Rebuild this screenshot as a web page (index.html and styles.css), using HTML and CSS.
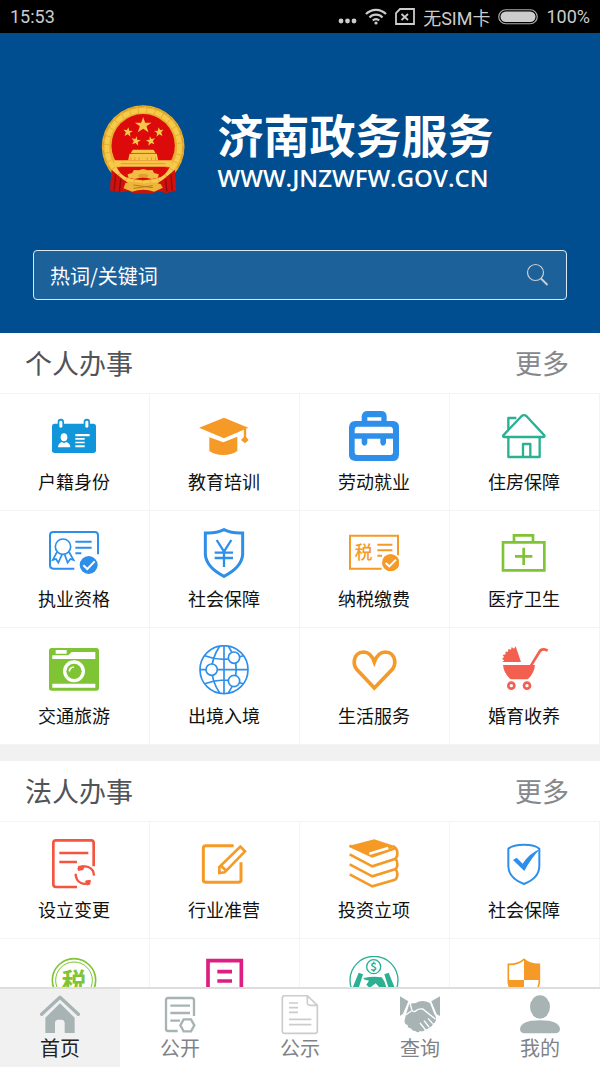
FILE: index.html
```html
<!DOCTYPE html>
<html lang="zh-CN">
<head>
    <meta charset="UTF-8">
    <meta name="viewport" content="width=device-width, initial-scale=1.0">
    <title>济南政务服务</title>
    <link rel="stylesheet" href="styles.css">
</head>
<body>
    <div class="status-bar">
        <span>15:53</span>
        <div class="status-right">
            <svg width="19" height="18" viewBox="0 0 19 18" fill="#ccc">
                <circle cx="3" cy="13" r="2.4"></circle>
                <circle cx="9.5" cy="13" r="2.4"></circle>
                <circle cx="16" cy="13" r="2.4"></circle>
            </svg>
            <svg width="22" height="18" viewBox="0 0 22 18" fill="none" stroke="#ccc" stroke-width="2.2">
                <path d="M1 6a14 14 0 0 1 20 0M4.5 9.5a9 9 0 0 1 13 0M7.8 12.500a4.5 4.5 0 0 1 6.4 0"></path>
                <circle cx="11" cy="15" r="1.6" fill="#ccc" stroke="none"></circle>
            </svg>
            <svg width="20" height="18" viewBox="0 0 20 18" fill="none" stroke="#ccc" stroke-width="1.8">
                <path d="M5 1h14v15H1V5zM6.5 6l6.500 6M13 6l-6.500 6"></path>
            </svg>
            <span>无SIM卡</span>
            <svg width="40" height="16" viewBox="0 0 40 16">
                <rect x="0.75" y="0.75" width="38.5" height="14" rx="7" fill="none" stroke="#aaa" stroke-width="1.2"></rect>
                <rect x="2.5" y="2.5" width="35" height="10.5" rx="5.25" fill="#ccc"></rect>
            </svg>
            <span>100%</span>
        </div>
    </div>

    <header class="header">
        <div class="brand">
            <svg class="emblem" width="85" height="90" viewBox="0 0 252 270">
                <path d="M30 196L26 256L58 262L80 258L100 266H150L172 258L194 264L224 256L220 196Z" fill="#c3150f"></path>
                <circle cx="125" cy="125" r="124" fill="#eab02f"></circle>
                <circle cx="125" cy="125" r="109" fill="none" stroke="#f5cb4e" stroke-width="14" stroke-dasharray="22 3"></circle>
                <circle cx="125" cy="125" r="120" fill="none" stroke="#d79a22" stroke-width="3" stroke-dasharray="16 9"></circle>
                <circle cx="125" cy="122" r="95" fill="#dc0a0a"></circle>
                <path d="M30 194L44 206L66 224L84 236L80 258L58 262L26 256ZM220 194L206 206L184 224L166 236L172 258L194 264L224 256Z" fill="#d0100c"></path>
                <path d="M42 208L38 256M58 222L54 260M208 208L212 256M192 222L196 260" stroke="#8f0d0a" stroke-width="4"></path>
                <g fill="#f8c64a">
                    <path d="M125 36l6 17h19l-15 11 6 18-16-11-16 11 6-18-15-11h19z"></path>
                    <path d="M81 67l2 10 11 1-9 6 2 11-8-7-10 5 4-11-7-8 10 1z"></path>
                    <path d="M171 67l-2 10-11 1 9 6-2 11 8-7 10 5-4-11 7-8-10 1z"></path>
                    <path d="M106 94l1 10 11 2-9 5 1 11-8-8-10 4 5-10-7-8 11 2z"></path>
                    <path d="M145 94l-1 10-11 2 9 5-1 11 8-8 10 4-5-10 7-8-11 2z"></path>
                    <path d="M94 134h62l6 10h-74z"></path>
                    <path d="M84 146h82l4 20H80z"></path>
                    <path d="M38 166h174v19H38z"></path>
                </g>
                <path d="M94 145h66M88 157v9M100 157v9M113 157v9M137 157v9M150 157v9M162 157v9M58 176h134" stroke="#d28a16" stroke-width="2"></path>
                <path d="M46 187H204Q196 206 178 216Q125 236 72 216Q54 206 46 187Z" fill="#dc0a0a"></path>
                <path d="M125 192l14 4 14-1 5 9 14 4-3 10-18 4-26-6-26 6-18-4-3-10 14-4 5-9 14 1z" fill="#f1bd43"></path>
                <ellipse cx="125" cy="212" rx="15" ry="6" fill="#dca02c"></ellipse>
                <path d="M72 234q26-8 53 2q27-10 53 2l6 10-26 12q-33-12-66 0l-26-10z" fill="#eeb53a"></path>
                <path d="M96 240l58 8M96 250l58-8" stroke="#bd7c17" stroke-width="3"></path>
            </svg>
            <div class="brand-text">
                <h1>济南政务服务</h1>
                <p>WWW.JNZWFW.GOV.CN</p>
            </div>
        </div>
        <form class="search">
            <input type="text" placeholder="热词/关键词" aria-label="热词/关键词">
            <button type="button" aria-label="搜索">
                <svg width="24" height="24" viewBox="0 0 24 24" fill="none" stroke="#c9ced3">
                    <circle cx="9.5" cy="9.5" r="8" stroke-width="1.2"></circle>
                    <path d="M15 15.5L21.5 22" stroke-width="2"></path>
                </svg>
            </button>
        </form>
    </header>

    <main class="content">
        <section>
            <div class="section-head">
                <h2>个人办事</h2>
                <a href="#">更多</a>
            </div>
            <div class="grid">
                <a class="cell" href="#">
                    <svg class="icon" viewBox="0 0 150 150" fill="#1296db">
                        <rect x="9" y="38" width="132" height="88" rx="8"></rect>
                        <rect x="26" y="23" width="19" height="32" rx="9"></rect>
                        <rect x="104" y="23" width="19" height="32" rx="9"></rect>
                        <g fill="#fff">
                            <rect x="31" y="29" width="9" height="21" rx="4"></rect>
                            <rect x="109" y="29" width="9" height="21" rx="4"></rect>
                            <ellipse cx="45" cy="79" rx="10" ry="12"></ellipse>
                            <path d="M27 109q0-12 12-16l6 4 6-4q13 4 13 16z"></path>
                            <path d="M79 69h43v7H79zM79 81h28v5H79zM79 92h28v5H79zM79 103h28v6H79z"></path>
                        </g>
                    </svg>
                    <span>户籍身份</span>
                </a>
                <a class="cell" href="#">
                    <svg class="icon" viewBox="0 0 150 150" fill="#f59a26">
                        <path d="M0 50L75 20L148 50L75 82Z"></path>
                        <path d="M31 79L73 94L115 77V120Q98 132 73 132Q48 132 31 120Z"></path>
                        <path d="M138 52V82" stroke="#f59a26" stroke-width="7"></path>
                        <path d="M138 74l11 13-11 10-12-10z"></path>
                    </svg>
                    <span>教育培训</span>
                </a>
                <a class="cell" href="#">
                    <svg class="icon" viewBox="0 0 150 150" fill="#2e8fea">
                        <path fill-rule="evenodd" d="M38 30V16Q40 0 56 0H96Q112 0 113 16V30H132Q150 32 150 48V132Q148 150 132 150H18Q0 148 0 132V48Q2 30 18 30ZM55 19V29H97V19ZM25 47Q17 48 17 57V67H132V57Q132 48 124 47ZM17 83V125Q18 132 25 132H125Q132 131 132 125V83H111V96Q108 104 102 104Q96 104 94 96V83H55V96Q52 104 47 104Q40 104 38 96V83Z"></path>
                    </svg>
                    <span>劳动就业</span>
                </a>
                <a class="cell" href="#">
                    <svg class="icon" viewBox="0 0 150 150" fill="none" stroke="#2bb094" stroke-width="7" stroke-linejoin="round">
                        <path d="M28 56V21H52M28 78V138H122V78M72 138V99H94V138"></path>
                        <path d="M13 73L68 15Q75 10 82 15L136 73Q138 78 132 78H17Q10 78 13 73Z"></path>
                    </svg>
                    <span>住房保障</span>
                </a>
                <a class="cell" href="#">
                    <svg class="icon" viewBox="0 0 150 150" fill="none" stroke="#2e8fea" stroke-width="6">
                        <path d="M147 79V22Q147 12 137 12H13Q3 12 3 22V112Q3 122 13 122H76"></path>
                        <circle cx="42" cy="56" r="23" stroke-width="5"></circle>
                        <path d="M24 72L11 96L21 93L28 104L39 80M60 72L74 96L64 93L56 104L47 80" stroke-width="5"></path>
                        <path d="M79 41H128M79 59H128M79 76H97"></path>
                        <circle cx="119" cy="111" r="27" fill="#2e8fea" stroke="none"></circle>
                        <path d="M103 112L115 123L137 100" stroke="#fff"></path>
                    </svg>
                    <span>执业资格</span>
                </a>
                <a class="cell" href="#">
                    <svg class="icon" viewBox="0 0 150 150" fill="none" stroke="#2e8fea" stroke-width="9">
                        <path d="M75 5Q50 17 19 15V80Q22 118 75 145Q128 118 131 80V15Q100 17 75 5Z"></path>
                        <path d="M53 36L75 71L97 36M75 70V117M47 74H102M47 90H102" stroke-width="7"></path>
                    </svg>
                    <span>社会保障</span>
                </a>
                <a class="cell" href="#">
                    <svg class="icon" viewBox="0 0 150 150" fill="none" stroke="#f59a26" stroke-width="6">
                        <path d="M147 82V23H3V122H98"></path>
                        <text class="icon-text" x="17" y="92" font-size="53" fill="#f59a26" stroke="none">税</text>
                        <path d="M85 50H130M85 67H130M85 83H99"></path>
                        <circle cx="125" cy="104" r="26" fill="#f59a26" stroke="none"></circle>
                        <path d="M110 105L121 115L141 95" stroke="#fff"></path>
                    </svg>
                    <span>纳税缴费</span>
                </a>
                <a class="cell" href="#">
                    <svg class="icon" viewBox="0 0 150 150" fill="none" stroke="#7fc434" stroke-width="8">
                        <path d="M12 43H136V127H12ZM45 43V22H102V43M74 59V111M48 85H100"></path>
                    </svg>
                    <span>医疗卫生</span>
                </a>
                <a class="cell" href="#">
                    <svg class="icon" viewBox="0 0 150 150" fill="#7fc434">
                        <rect x="0" y="9" width="150" height="128" rx="8"></rect>
                        <g fill="#fff">
                            <path d="M20 15H53V26H20zM10 31H58L68 21H139V42H10zM10 116H139V128H10z"></path>
                            <circle cx="75" cy="79" r="33"></circle>
                        </g>
                        <circle cx="75" cy="79" r="23"></circle>
                        <path d="M61 79Q62 67 75 66" fill="none" stroke="#fff" stroke-width="5"></path>
                    </svg>
                    <span>交通旅游</span>
                </a>
                <a class="cell" href="#">
                    <svg class="icon" viewBox="0 0 150 150" fill="none" stroke="#2e8fea" stroke-width="5">
                        <circle cx="75" cy="74" r="72"></circle>
                        <path d="M75 2V146M3 74H147M62 4Q15 74 62 144M88 4Q135 74 88 144M17 32Q75 54 133 32M17 116Q75 94 133 116"></path>
                        <g fill="#fff">
                            <circle cx="38" cy="74" r="17"></circle>
                            <circle cx="105" cy="38" r="17"></circle>
                            <circle cx="105" cy="108" r="17"></circle>
                        </g>
                    </svg>
                    <span>出境入境</span>
                </a>
                <a class="cell" href="#">
                    <svg class="icon" viewBox="0 0 150 150" fill="none" stroke="#f59a26" stroke-width="11">
                        <path d="M76 129L23 73Q14 62 16 46Q20 22 44 21Q65 21 76 51Q87 21 109 21Q133 22 137 46Q139 62 130 73Z"></path>
                    </svg>
                    <span>生活服务</span>
                </a>
                <a class="cell" href="#">
                    <svg class="icon" viewBox="0 0 150 150" fill="#f3604f">
                        <path d="M66 51L50 4L45 11L38 6L36 14L28 12L27 20L19 20L20 28L11 30L15 36L9 42L16 46L10 51Z"></path>
                        <path d="M12 60H108Q106 84 88 101Q86 103 80 103H42Q36 103 33 101Q14 84 12 60Z"></path>
                        <g fill="none" stroke="#f3604f">
                            <path d="M96 62L121 21Q128 8 146 17" stroke-width="8"></path>
                            <circle cx="37" cy="122" r="9" stroke-width="8"></circle>
                            <circle cx="84" cy="122" r="9" stroke-width="8"></circle>
                        </g>
                    </svg>
                    <span>婚育收养</span>
                </a>
            </div>
        </section>

        <section>
            <div class="section-head">
                <h2>法人办事</h2>
                <a href="#">更多</a>
            </div>
            <div class="grid">
                <a class="cell" href="#">
                    <svg class="icon" viewBox="0 0 150 150" fill="none" stroke="#f4553f" stroke-width="8">
                        <path d="M134 82V12Q134 4 126 4H21Q13 4 13 12V136Q13 144 21 144H84"></path>
                        <path d="M31 42H118M31 69H84"></path>
                        <path d="M87 92Q100 78 118 84Q134 90 135 110M80 104Q80 124 96 132Q110 138 122 130" stroke-width="7"></path>
                        <path d="M88 82L104 80L102 92L88 94ZM110 126L124 124L122 136L114 138Z" fill="#f4553f" stroke-width="3"></path>
                    </svg>
                    <span>设立变更</span>
                </a>
                <a class="cell" href="#">
                    <svg class="icon" viewBox="0 0 150 150" fill="none" stroke="#f59a26" stroke-width="9">
                        <path d="M104 20H21Q13 20 13 28V123Q13 130 21 130H118Q126 130 126 123V70"></path>
                        <path d="M61 102V84L124 23L138 37L77 100ZM66 80L82 95" stroke-width="8"></path>
                    </svg>
                    <span>行业准营</span>
                </a>
                <a class="cell" href="#">
                    <svg class="icon" viewBox="0 0 150 150" fill="none" stroke="#f59a26" stroke-width="8">
                        <path d="M1 20L76 1L140 22L70 52Z" fill="#f59a26" stroke="none"></path>
                        <path d="M1 20L70 52L138 28M2 46L70 82L138 60Q145 56 145 43Q145 28 132 22M2 76L70 112L138 91Q145 87 145 75Q145 64 140 60M2 106L70 142L138 122Q145 118 145 106Q145 96 140 91"></path>
                        <path d="M61 44L118 27" stroke="#fff" stroke-width="8"></path>
                    </svg>
                    <span>投资立项</span>
                </a>
                <a class="cell" href="#">
                    <svg class="icon" viewBox="0 0 150 150" fill="none" stroke="#2e8fea" stroke-width="6">
                        <path d="M75 17Q108 17 121 29V82Q120 118 75 135Q29 118 28 82V29Q42 17 75 17Z"></path>
                        <path d="M42 63L53 56L71 74Q92 42 123 30Q96 58 76 96Z" fill="#2e8fea" stroke="none"></path>
                    </svg>
                    <span>社会保障</span>
                </a>
                <a class="cell" href="#">
                    <svg class="icon" viewBox="0 0 150 150" fill="none" stroke="#7fc434">
                        <circle cx="75" cy="73" r="65" stroke-width="5"></circle>
                        <circle cx="75" cy="73" r="55" stroke-width="3"></circle>
                        <text class="icon-text bold" x="38" y="104" font-size="74" fill="#7fc434" stroke="none">税</text>
                    </svg>
                </a>
                <a class="cell" href="#">
                    <svg class="icon" viewBox="0 0 150 150" fill="none" stroke="#dc1f80" stroke-width="11">
                        <path d="M27 140V14H127V140ZM55 47H99M55 75H99"></path>
                    </svg>
                </a>
                <a class="cell" href="#">
                    <svg class="icon" viewBox="0 0 150 150" fill="none" stroke="#2bb094" stroke-width="4">
                        <circle cx="75" cy="73" r="72"></circle>
                        <circle cx="74" cy="32" r="21"></circle>
                        <text class="icon-text bold" x="64" y="44" font-size="34" fill="#2bb094" stroke="none">$</text>
                        <g fill="#2bb094" stroke="none">
                            <path d="M29 50L42 55L28 100L12 92Z"></path>
                            <path d="M119 50L106 55L120 100L136 92Z"></path>
                            <path d="M44 66Q72 60 98 64L106 76L114 100H96L80 82L62 96L52 86L60 74L44 70Z"></path>
                        </g>
                    </svg>
                </a>
                <a class="cell" href="#">
                    <svg class="icon" viewBox="0 0 150 150" fill="none" stroke="#f59a26" stroke-width="5">
                        <path d="M75 10Q58 26 28 25V80Q34 118 75 138Q116 118 121 80V25Q92 26 75 10Z"></path>
                        <path d="M75 10Q92 26 121 25V72H75ZM28 72H75V138Q34 118 28 80Z" fill="#f59a26" stroke="none"></path>
                    </svg>
                </a>
            </div>
        </section>
    </main>

    <nav class="tab-bar">
        <a class="tab active" href="#">
            <svg class="tab-icon" viewBox="0 0 120 120" fill="#a8b4b4">
                <path d="M5 58L60 7L115 58" fill="none" stroke="#a8b4b4" stroke-width="10" stroke-linecap="round" stroke-linejoin="round"></path>
                <path d="M16 68L60 25L104 68V114H74V82Q72 74 66 74H53Q46 74 45 82V114H16Z"></path>
            </svg>
            <span>首页</span>
        </a>
        <a class="tab" href="#">
            <svg class="tab-icon" viewBox="0 0 120 120" fill="none" stroke="#a8b4b4" stroke-width="7">
                <path d="M102 63V16Q102 9 95 9H24Q18 9 18 16V102Q18 108 24 108H53"></path>
                <path d="M31 32H90M31 54H90M31 77H60"></path>
                <path d="M61 91L71 73H93L103 91L93 109H71Z"></path>
            </svg>
            <span>公开</span>
        </a>
        <a class="tab" href="#">
            <svg class="tab-icon" viewBox="0 0 120 120" fill="none" stroke="#ccc" stroke-width="5">
                <path d="M82 2H14Q7 2 7 9V108Q7 115 14 115H105Q112 115 112 108V31ZM82 2V24Q83 31 90 31H112"></path>
                <path d="M27 24H54M27 38H54M27 52H54M27 73H94M27 89H94"></path>
            </svg>
            <span>公示</span>
        </a>
        <a class="tab" href="#">
            <svg class="tab-icon" viewBox="0 0 120 120" fill="#a8b4b4">
                <path d="M0 4L25 19L9 56L0 63ZM120 4L94 19L110 58L120 63Z"></path>
                <path d="M28 26L48 24Q56 18 67 18Q78 18 90 24L103 58Q110 66 107 78Q106 84 98 86Q98 94 89 97Q84 104 76 102Q72 112 60 108Q54 116 46 108Q36 110 33 100Q22 100 23 90Q12 88 14 76L18 58Z"></path>
                <path d="M30 24L36 46Q42 54 50 46Q56 40 68 42L106 72M84 70L98 86M72 77L87 96M60 84L76 104M34 48L17 60" fill="none" stroke="#fff" stroke-width="4"></path>
            </svg>
            <span>查询</span>
        </a>
        <a class="tab" href="#">
            <svg class="tab-icon" viewBox="0 0 120 120" fill="#a8b4b4">
                <ellipse cx="60" cy="36" rx="30" ry="35"></ellipse>
                <path d="M0 102Q2 76 60 76Q118 76 120 102Q120 114 106 115H14Q0 114 0 102Z"></path>
            </svg>
            <span>我的</span>
        </a>
    </nav>
</body>
</html>
```
FILE: styles.css
```css
* {
    margin: 0;
    padding: 0;
    box-sizing: border-box;
}

body {
    height: 100vh;
    display: flex;
    flex-direction: column;
    background: #fff;
    color: #111;
    font-family: "Noto Sans CJK SC", sans-serif;
}

a {
    color: inherit;
    text-decoration: none;
}

.status-bar {
    height: 33px;
    padding: 0 10px;
    display: flex;
    flex: none;
    align-items: center;
    justify-content: space-between;
    background: #000;
    color: #ccc;
    font-family: Roboto, "Noto Sans CJK SC", sans-serif;
    font-size: 18px;
}

.status-right {
    display: flex;
    align-items: center;
    gap: 8px;
}

.header {
    flex: none;
    padding: 72px 33px 33px;
    background: #004d8f;
    color: #fff;
}

.brand {
    display: flex;
    justify-content: center;
    gap: 32px;
    margin-bottom: 55px;
    padding-right: 6px;
}

.emblem {
    display: block;
}

.brand-text h1 {
    font-size: 46px;
    font-weight: 700;
    line-height: 56px;
}

.brand-text p {
    font-family: "Open Sans", sans-serif;
    font-size: 24px;
    font-weight: 600;
    line-height: 34px;
}

.search {
    display: flex;
    height: 50px;
    border: 1px solid #dce7f0;
    border-radius: 4px;
    background: #1d619b;
}

.search input {
    flex: 1;
    min-width: 0;
    padding: 0 16px;
    border: none;
    outline: none;
    background: none;
    color: #fff;
    font-family: inherit;
    font-size: 20px;
}

.search input::placeholder {
    color: #fff;
    opacity: 1;
}

.search button {
    display: flex;
    align-items: center;
    padding: 0 16px;
    border: none;
    background: none;
    cursor: pointer;
}

.content {
    flex: 1;
    min-height: 0;
    overflow-y: auto;
    scrollbar-width: none;
    background: #f1f1f1;
}

.content section {
    margin-bottom: 16px;
    background: #fff;
}

.section-head {
    display: flex;
    align-items: center;
    justify-content: space-between;
    height: 60px;
    padding: 0 31px 1px 25px;
    font-size: 27px;
    line-height: 40px;
}

.section-head h2 {
    color: #505357;
    font-size: inherit;
    font-weight: 400;
}

.section-head a {
    color: #85888d;
}

.grid {
    display: grid;
    grid-template-columns: repeat(4, 1fr);
    border-top: 1px solid #f4f4f4;
}

.cell {
    display: flex;
    flex-direction: column;
    align-items: center;
    gap: 7px;
    height: 117px;
    padding: 17px 1px 0 0;
    border-right: 1px solid #f4f4f4;
    border-bottom: 1px solid #f4f4f4;
    font-size: 18px;
    line-height: 26px;
}

.icon {
    width: 50px;
    height: 50px;
}

.icon-text {
    font-family: "Noto Sans CJK SC", sans-serif;
    font-weight: 500;
}

.icon-text.bold {
    font-weight: 700;
}

.tab-bar {
    display: flex;
    flex: none;
    height: 80px;
    border-top: 2px solid #ddd;
    background: #fff;
}

.tab {
    display: flex;
    flex: 1;
    flex-direction: column;
    align-items: center;
    padding-top: 6px;
    color: #7f8387;
    font-size: 20px;
    line-height: 26px;
}

.tab.active {
    background: #f1f1f1;
    color: #222;
}

.tab-icon {
    width: 40px;
    height: 40px;
}
```
